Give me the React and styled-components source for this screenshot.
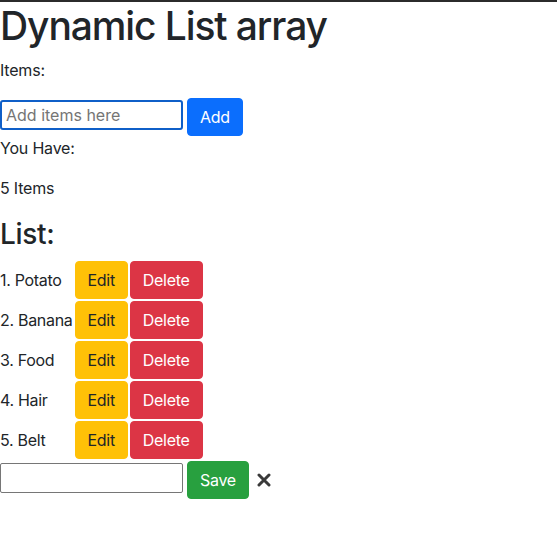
import React, { useState } from 'react';
import styled, { createGlobalStyle } from 'styled-components';

const GlobalStyle = createGlobalStyle`
  html, body {
    margin: 0;
    padding: 0;
    background: #fff;
  }
  body {
    font-family: Inter, "Liberation Sans", sans-serif;
    font-size: 16px;
    line-height: 1.5;
    color: #212529;
    border-top: 2px solid #2b2b2b;
  }
`;

export const Container = styled.div`
  width: 100%;
`;

export const Title = styled.h1`
  margin: 0 0 8px;
  font-size: 39px;
  font-weight: 500;
  line-height: 48px;
  letter-spacing: -1.1px;
`;

export const SubTitle = styled.h3`
  margin: 0 0 8px;
  padding-top: 2px;
  font-size: 28px;
  font-weight: 500;
  line-height: 1.2;
  letter-spacing: -0.3px;
`;

export const Text = styled.p`
  margin: 0 0 16px;
  letter-spacing: -0.2px;
`;

export const FormRow = styled.div`
  display: flex;
  align-items: flex-start;
  gap: 4px;
  margin-top: ${props => props.offset || 0}px;
`;

export const Input = styled.input`
  box-sizing: border-box;
  width: 183px;
  height: 30px;
  margin: 2px 0 0;
  padding: 1px 4px;
  font-family: Inter, "Liberation Sans", sans-serif;
  font-size: 16px;
  color: #212529;
  border: ${props => (props.focused ? '2px solid #0f5fc8' : '1px solid #767676')};
  border-radius: ${props => (props.focused ? '3px' : '2px')};
  outline: none;
  &::placeholder {
    color: #757575;
  }
`;

const colors = {
  primary: { bg: '#0b6efd', fg: '#fff' },
  warning: { bg: '#ffc107', fg: '#212529' },
  danger: { bg: '#dc3545', fg: '#fff' },
  success: { bg: '#28a03f', fg: '#fff' },
};

export const Button = styled.button`
  box-sizing: border-box;
  height: 38px;
  padding: 6px 12px;
  font-family: Inter, "Liberation Sans", sans-serif;
  font-size: 16px;
  line-height: 24px;
  letter-spacing: -0.3px;
  border: 1px solid ${props => colors[props.variant].bg};
  border-radius: 4px;
  background: ${props => colors[props.variant].bg};
  color: ${props => colors[props.variant].fg};
  cursor: pointer;
`;

export const ItemList = styled.div`
  display: grid;
  grid-template-columns: max-content max-content max-content;
  column-gap: 2px;
  row-gap: 2px;
  align-items: center;
  justify-content: start;
  padding-top: 1px;
`;

export const ItemLabel = styled.span`
  letter-spacing: -0.3px;
`;

export const CloseIcon = styled.button`
  display: flex;
  align-items: center;
  justify-content: center;
  height: 38px;
  margin-left: 4px;
  padding: 0;
  border: none;
  background: none;
  cursor: pointer;
`;

const Times = () => (
  <svg width="14" height="14" viewBox="0 0 14 14">
    <path d="M2 2 L12 12 M12 2 L2 12" stroke="#3a3a3a" strokeWidth="3" strokeLinecap="round" />
  </svg>
);

export default function App() {
  const [items] = useState(['Potato', 'Banana', 'Food', 'Hair', 'Belt']);

  return (
    <Container>
      <GlobalStyle />
      <Title>Dynamic List array</Title>
      <Text>Items:</Text>
      <FormRow>
        <Input focused placeholder="Add items here" />
        <Button variant="primary">Add</Button>
      </FormRow>
      <Text>You Have:</Text>
      <Text>{items.length} Items</Text>
      <SubTitle>List:</SubTitle>
      <ItemList>
        {items.map((item, i) => (
          <React.Fragment key={item}>
            <ItemLabel>{i + 1}. {item}</ItemLabel>
            <Button variant="warning">Edit</Button>
            <Button variant="danger">Delete</Button>
          </React.Fragment>
        ))}
      </ItemList>
      <FormRow offset={2}>
        <Input />
        <Button variant="success">Save</Button>
        <CloseIcon><Times /></CloseIcon>
      </FormRow>
    </Container>
  );
}
